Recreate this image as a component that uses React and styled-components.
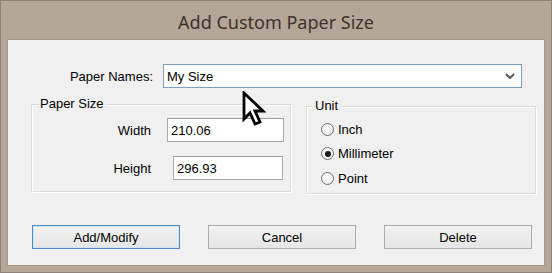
import styled, { createGlobalStyle } from "styled-components";

const GlobalStyle = createGlobalStyle`
  html, body {
    margin: 0;
    padding: 0;
    background: #b5a797;
  }
  * {
    box-sizing: border-box;
  }
`;

const App = () => {
  return (
    <>
      <GlobalStyle />
      <Window>
        <TitleBar>Add Custom Paper Size</TitleBar>
        <Client>
          <NamesRow>
            <NamesLabel>Paper Names:</NamesLabel>
            <Combo>
              <span>My Size</span>
              <Chevron viewBox="0 0 10 6">
                <path d="M1 1 L5 5 L9 1" />
              </Chevron>
            </Combo>
          </NamesRow>

          <GroupsRow>
            <Group $width={260} $height={88}>
              <Legend>Paper Size</Legend>
              <FieldRow>
                <FieldLabel>Width</FieldLabel>
                <TextBox $gap={16} $width={117}>210.06</TextBox>
              </FieldRow>
              <FieldRow>
                <FieldLabel>Height</FieldLabel>
                <TextBox $gap={22} $width={110}>296.93</TextBox>
              </FieldRow>
            </Group>

            <Group $width={230} $height={88} $offset={2}>
              <Legend>Unit</Legend>
              <RadioList>
                <RadioRow>
                  <Radio />
                  Inch
                </RadioRow>
                <RadioRow>
                  <Radio $checked />
                  Millimeter
                </RadioRow>
                <RadioRow>
                  <Radio />
                  Point
                </RadioRow>
              </RadioList>
            </Group>
          </GroupsRow>

          <ButtonRow>
            <Button $default>Add/Modify</Button>
            <Button>Cancel</Button>
            <Button>Delete</Button>
          </ButtonRow>
        </Client>

        <Cursor viewBox="0 0 24 36">
          <path
            d="M2 2 L2 28 L8 22 L13 33 L18 31 L13 20 L21 20 Z"
            fill="#fff"
            stroke="#000"
            strokeWidth="2.8"
            strokeLinejoin="miter"
          />
        </Cursor>
      </Window>
    </>
  );
};
export default App;

// Styled components

const Window = styled.div`
  position: relative;
  width: 552px;
  height: 273px;
  display: flex;
  flex-direction: column;
  background: #b5a797;
  border: 1px solid #8d8277;
  font-family: "Liberation Sans", Arial, sans-serif;
  font-size: 13px;
  color: #000;
`;

const TitleBar = styled.div`
  height: 38px;
  display: flex;
  align-items: center;
  justify-content: center;
  padding-top: 3px;
  font-family: "Noto Sans", "Open Sans", sans-serif;
  font-size: 18px;
  color: #3a342e;
`;

const Client = styled.div`
  flex: 1;
  margin: 0 6px 6px 6px;
  background: #f0f0f0;
  border: 1px solid #a3978b;
  display: flex;
  flex-direction: column;
`;

const NamesRow = styled.div`
  display: flex;
  align-items: center;
  gap: 10px;
  padding: 24px 0 0 55px;
`;

const NamesLabel = styled.div`
  width: 90px;
  text-align: right;
`;

const Combo = styled.div`
  width: 359px;
  height: 24px;
  display: flex;
  align-items: center;
  justify-content: space-between;
  padding: 0 6px 0 3px;
  background: #fff;
  border: 1px solid #7a9ec6;
`;

const Chevron = styled.svg`
  width: 10px;
  height: 6px;
  fill: none;
  stroke: #555;
  stroke-width: 2;
`;

const GroupsRow = styled.div`
  display: flex;
  align-items: flex-start;
  gap: 15px;
  padding: 16px 0 0 23px;
`;

const Group = styled.div`
  position: relative;
  width: ${(p) => p.$width}px;
  height: ${(p) => p.$height}px;
  margin-top: ${(p) => p.$offset || 0}px;
  border: 1px solid #dcdcdc;
  box-shadow: inset 1px 1px 0 #fff, 1px 1px 0 #fff;
`;

const Legend = styled.span`
  position: absolute;
  top: -9px;
  left: 7px;
  padding: 0 2px 0 1px;
  background: #f0f0f0;
  line-height: 16px;
`;

const FieldRow = styled.div`
  display: flex;
  align-items: center;
  margin-top: 13px;

  & + & {
    margin-top: 14px;
  }
`;

const FieldLabel = styled.div`
  width: 119px;
  text-align: right;
`;

const TextBox = styled.div`
  margin-left: ${(p) => p.$gap}px;
  width: ${(p) => p.$width}px;
  height: 24px;
  display: flex;
  align-items: center;
  padding-left: 3px;
  background: #fff;
  border: 1px solid #a9a9a9;
  border-top-color: #9a9a9a;
`;

const RadioList = styled.div`
  display: flex;
  flex-direction: column;
  gap: 10.5px;
  padding: 15px 0 0 14px;
`;

const RadioRow = styled.label`
  display: flex;
  align-items: center;
  gap: 4px;
  height: 14px;
`;

const Radio = styled.span`
  width: 13px;
  height: 13px;
  border-radius: 50%;
  border: 1px solid #6f6f6f;
  background: radial-gradient(circle at 40% 35%, #fff 0%, #f2f2f2 60%, #e2e2e2 100%);
  display: flex;
  align-items: center;
  justify-content: center;

  &::after {
    content: "";
    width: 6px;
    height: 6px;
    border-radius: 50%;
    background: ${(p) => (p.$checked ? "#1a1a1a" : "transparent")};
  }
`;

const ButtonRow = styled.div`
  display: flex;
  gap: 28px;
  padding: 31px 0 0 24px;
`;

const Button = styled.div`
  width: 148px;
  height: 24px;
  display: flex;
  align-items: center;
  justify-content: center;
  border: 1px solid ${(p) => (p.$default ? "#4f8cc4" : "#acacac")};
  background: linear-gradient(#f2f2f2, #e6e6e6);
  box-shadow: ${(p) => (p.$default ? "inset 0 0 0 1px #cfe4f6" : "none")};
`;

const Cursor = styled.svg`
  position: absolute;
  left: 241px;
  top: 90px;
  width: 24px;
  height: 36px;
`;
